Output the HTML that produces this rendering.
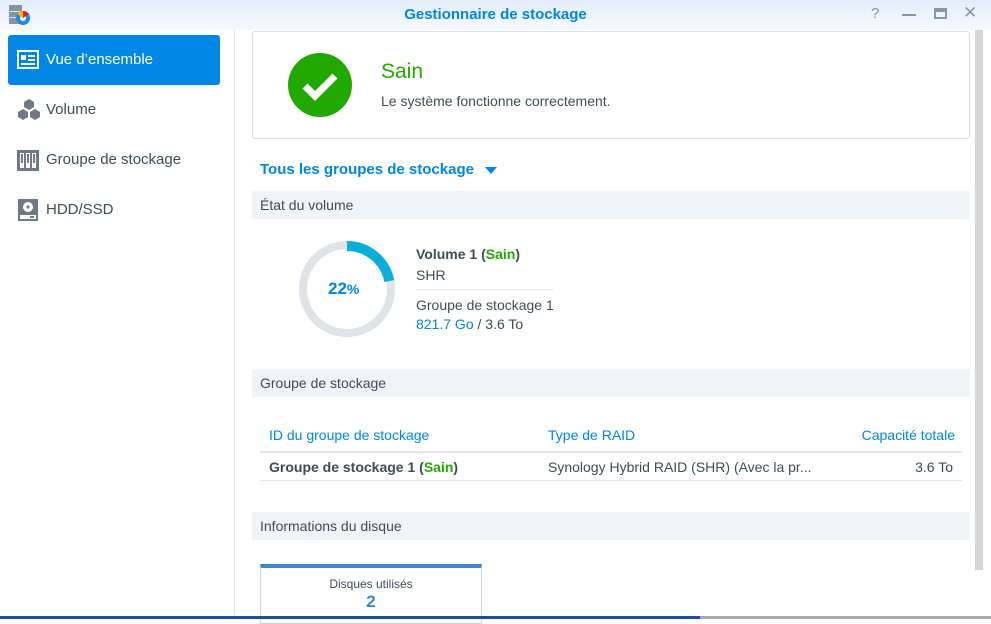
<!DOCTYPE html>
<html><head><meta charset="utf-8"><style>
*{margin:0;padding:0;box-sizing:border-box}
body{width:991px;height:619px;overflow:hidden;background:#fff;font-family:"Liberation Sans",sans-serif;position:relative;color:#414b55}
.a{position:absolute;white-space:nowrap}
.hdr{left:0;top:0;width:991px;height:30px;background:linear-gradient(#e3eefa,#f6f9fd)}
.side{left:0;top:30px;width:235px;height:589px;background:#fff;border-right:1px solid #e3e7eb}
.nav{left:8px;width:212px;height:50px;font-size:15px;color:#414b55;line-height:50px;padding-left:38px}
.sec{left:252px;width:718px;height:28px;background:#f1f4f7;font-size:14px;line-height:28px;padding-left:8px;color:#414b55}
.blue{color:#0086e5}
.green{color:#21a900}
.t{font-size:14px}
</style></head><body>
<div class="a hdr"></div>
<svg class="a" style="left:8px;top:4px" width="24" height="22" viewBox="0 0 24 22">
<rect x="1" y="1" width="13" height="19" fill="#8494a5"/><rect x="1" y="7" width="13" height="1" fill="#dde"/><rect x="1" y="13" width="13" height="1" fill="#dde"/>
<circle cx="15" cy="14" r="7" fill="#1a8de0"/><circle cx="15" cy="14" r="3" fill="#fff"/><path d="M15 14L15 7A7 7 0 0 1 21 10Z" fill="#e02020"/><path d="M15 14L9 10A7 7 0 0 1 15 7Z" fill="#f2b400"/></svg>
<div class="a" style="left:0;top:6px;width:991px;text-align:center;font-size:15px;font-weight:bold;color:#0086e5">Gestionnaire de stockage</div>
<div class="a" style="left:871px;top:5px;font-size:15px;color:#8a97a4">?</div>
<div class="a" style="left:902px;top:14px;width:14px;height:2px;background:#8a97a4"></div>
<div class="a" style="left:934px;top:8px;width:13px;height:11px;border:2px solid #8a97a4;border-top-width:4px"></div>
<div class="a" style="left:963px;top:3px;font-size:17px;color:#8a97a4">✕</div>

<div class="a side"></div>
<div class="a nav" style="top:35px;background:#0086e5;color:#fff;border-radius:3px">Vue d’ensemble</div>
<svg class="a" style="left:17px;top:50px" width="22" height="19"><rect x="1" y="1" width="20" height="17" fill="none" stroke="#fff" stroke-width="2"/><rect x="4" y="5" width="5" height="5" fill="#fff"/><rect x="11" y="5" width="7" height="2" fill="#fff"/><rect x="11" y="9" width="7" height="2" fill="#fff"/><rect x="4" y="13" width="14" height="2" fill="#fff"/></svg>
<div class="a nav" style="top:85px">Volume</div>
<svg class="a" style="left:16px;top:98px" width="26" height="25" viewBox="0 0 26 25" fill="#6f7a86"><path d="M13 1l5 3v5l-5 3-5-3V4z"/><path d="M7 11l5 3v5l-5 3-5-3v-5z"/><path d="M19 11l5 3v5l-5 3-5-3v-5z"/></svg>
<div class="a nav" style="top:135px">Groupe de stockage</div>
<svg class="a" style="left:17px;top:150px" width="22" height="21"><rect x="0" y="0" width="22" height="21" fill="#6f7a86"/><rect x="3" y="3" width="4" height="15" fill="#fff"/><rect x="9" y="3" width="4" height="15" fill="#fff"/><rect x="15" y="3" width="4" height="15" fill="#fff"/><rect x="4" y="4" width="2" height="9" fill="#6f7a86"/><rect x="10" y="4" width="2" height="9" fill="#6f7a86"/><rect x="16" y="4" width="2" height="9" fill="#6f7a86"/></svg>
<div class="a nav" style="top:185px">HDD/SSD</div>
<svg class="a" style="left:18px;top:199px" width="20" height="22"><rect x="0" y="0" width="20" height="22" fill="#6f7a86"/><circle cx="10" cy="8" r="5" fill="#fff"/><circle cx="10" cy="8" r="1.6" fill="#6f7a86"/><rect x="2" y="16" width="16" height="4" fill="#fff"/><rect x="12" y="17" width="4" height="2" fill="#6f7a86"/></svg>

<div class="a" style="left:252px;top:31px;width:718px;height:108px;border:1px solid #d6dde4;border-radius:3px"></div>
<svg class="a" style="left:288px;top:53px" width="64" height="64"><circle cx="32" cy="32" r="32" fill="#21a900"/><path d="M17 33l10 10 20-20" fill="none" stroke="#fff" stroke-width="7"/></svg>
<div class="a green" style="left:381px;top:60px;font-size:21px">Sain</div>
<div class="a t" style="left:381px;top:93px">Le système fonctionne correctement.</div>

<div class="a blue" style="left:260px;top:161px;font-size:15px;font-weight:bold">Tous les groupes de stockage</div>
<div class="a" style="left:485px;top:167px;width:0;height:0;border-left:6px solid transparent;border-right:6px solid transparent;border-top:7px solid #0086e5"></div>

<div class="a sec" style="top:191px">État du volume</div>
<svg class="a" style="left:298px;top:240px" width="98" height="98"><circle cx="49" cy="49" r="44" fill="none" stroke="#e0e3e7" stroke-width="8"/><circle cx="49" cy="49" r="43" fill="none" stroke="#0aaed6" stroke-width="10" stroke-dasharray="59.5 400" transform="rotate(-90 49 49)"/></svg>
<div class="a blue" style="left:328px;top:279px;font-size:17px;font-weight:bold">22<span style="font-size:14px">%</span></div>
<div class="a t" style="left:416px;top:246px;font-weight:bold">Volume 1 (<span class="green">Sain</span>)</div>
<div class="a t" style="left:416px;top:267px">SHR</div>
<div class="a" style="left:416px;top:289px;width:138px;height:1px;background:#e3e7eb"></div>
<div class="a t" style="left:416px;top:297px">Groupe de stockage 1</div>
<div class="a t" style="left:416px;top:316px"><span class="blue">821.7 Go</span> / 3.6 To</div>

<div class="a sec" style="top:369px">Groupe de stockage</div>
<div class="a blue t" style="left:269px;top:427px">ID du groupe de stockage</div>
<div class="a blue t" style="left:548px;top:427px">Type de RAID</div>
<div class="a blue t" style="right:36px;top:427px">Capacité totale</div>
<div class="a" style="left:260px;top:451px;width:702px;height:2px;background:#e3e7eb"></div>
<div class="a t" style="left:269px;top:459px;font-weight:bold">Groupe de stockage 1 (<span class="green">Sain</span>)</div>
<div class="a t" style="left:548px;top:459px">Synology Hybrid RAID (SHR) (Avec la pr...</div>
<div class="a t" style="right:38px;top:459px">3.6 To</div>
<div class="a" style="left:260px;top:480px;width:702px;height:1px;background:#e3e7eb"></div>

<div class="a sec" style="top:512px">Informations du disque</div>
<div class="a" style="left:260px;top:564px;width:222px;height:60px;border:1px solid #c9d6e3;border-top:4px solid #3f86d0"></div>
<div class="a" style="left:260px;top:577px;width:222px;text-align:center;font-size:12px">Disques utilisés</div>
<div class="a" style="left:260px;top:592px;width:222px;text-align:center;font-size:17px;font-weight:bold;color:#3f86d0">2</div>

<div class="a" style="left:975px;top:30px;width:8px;height:540px;background:#d5d7d9"></div>
<div class="a" style="left:0;top:616px;width:700px;height:3px;background:#1a4fa0"></div>
<div class="a" style="left:700px;top:616px;width:291px;height:3px;background:#a9adb2"></div>
</body></html>
